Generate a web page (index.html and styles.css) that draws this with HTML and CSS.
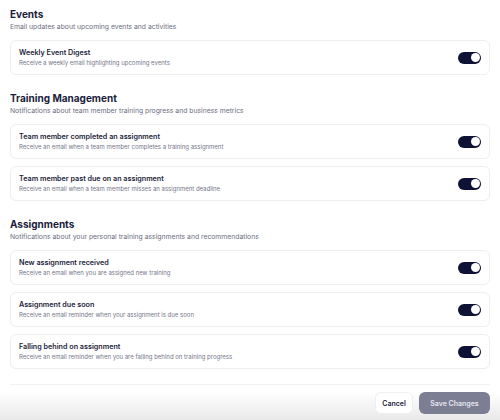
FILE: index.html
```html
<!DOCTYPE html>
<html>
<head>
<meta charset="utf-8">
<link rel="stylesheet" href="styles.css">
</head>
<body>
<div class="page">
  <section class="section">
    <h2 class="heading">Events</h2>
    <p class="sub">Email updates about upcoming events and activities</p>
    <div class="cards">
      <div class="card">
        <div class="text">
          <div class="title">Weekly Event Digest</div>
          <div class="desc">Receive a weekly email highlighting upcoming events</div>
        </div>
        <span class="toggle"><span class="knob"></span></span>
      </div>
    </div>
  </section>
  <section class="section">
    <h2 class="heading">Training Management</h2>
    <p class="sub">Notifications about team member training progress and business metrics</p>
    <div class="cards">
      <div class="card">
        <div class="text">
          <div class="title">Team member completed an assignment</div>
          <div class="desc">Receive an email when a team member completes a training assignment</div>
        </div>
        <span class="toggle"><span class="knob"></span></span>
      </div>
      <div class="card">
        <div class="text">
          <div class="title">Team member past due on an assignment</div>
          <div class="desc">Receive an email when a team member misses an assignment deadline</div>
        </div>
        <span class="toggle"><span class="knob"></span></span>
      </div>
    </div>
  </section>
  <section class="section">
    <h2 class="heading">Assignments</h2>
    <p class="sub">Notifications about your personal training assignments and recommendations</p>
    <div class="cards">
      <div class="card">
        <div class="text">
          <div class="title">New assignment received</div>
          <div class="desc">Receive an email when you are assigned new training</div>
        </div>
        <span class="toggle"><span class="knob"></span></span>
      </div>
      <div class="card">
        <div class="text">
          <div class="title">Assignment due soon</div>
          <div class="desc">Receive an email reminder when your assignment is due soon</div>
        </div>
        <span class="toggle"><span class="knob"></span></span>
      </div>
      <div class="card">
        <div class="text">
          <div class="title">Falling behind on assignment</div>
          <div class="desc">Receive an email reminder when you are falling behind on training progress</div>
        </div>
        <span class="toggle"><span class="knob"></span></span>
      </div>
    </div>
  </section>
  <div class="separator"></div>
</div>
<footer class="footer">
  <button class="btn cancel">Cancel</button>
  <button class="btn save">Save Changes</button>
</footer>
</body>
</html>
```
FILE: styles.css
```css
html, body {
  margin: 0;
  padding: 0;
  background: #ffffff;
  height: 420px;
  overflow: hidden;
}
body {
  font-family: Inter, "Noto Sans", sans-serif;
  color: #1b1d3a;
}
.page {
  padding: 7px 10px 0 10px;
}
.section {
  margin-bottom: 16px;
}
.section:last-of-type {
  margin-bottom: 0;
}
.heading {
  margin: 0;
  font-size: 10px;
  line-height: 14px;
  font-weight: 700;
  color: #1a1c3b;
}
.sub {
  margin: 0 0 7px 0;
  font-size: 6.8px;
  line-height: 12px;
  color: #6c6e82;
}
.cards {
  display: flex;
  flex-direction: column;
  gap: 7px;
}
.card {
  height: 35px;
  box-sizing: border-box;
  border: 1px solid #eeeef2;
  border-radius: 6px;
  padding: 0 8px;
  display: flex;
  align-items: center;
  justify-content: space-between;
}
.text {
  display: flex;
  flex-direction: column;
  gap: 1px;
}
.title {
  font-size: 7.2px;
  line-height: 10px;
  font-weight: 600;
  color: #1c1e3a;
}
.desc {
  font-size: 6px;
  line-height: 8px;
  color: #74768a;
}
.toggle {
  width: 23px;
  height: 12px;
  border-radius: 6px;
  background: #0e1336;
  display: flex;
  align-items: center;
  justify-content: flex-end;
  padding: 0 1.5px;
  box-sizing: border-box;
}
.knob {
  width: 9px;
  height: 9px;
  border-radius: 50%;
  background: #ffffff;
}
.separator {
  margin-top: 15px;
  height: 1px;
  background: #f2f2f4;
}
.footer {
  margin-top: 7px;
  height: 29px;
  padding: 0 10px;
  display: flex;
  justify-content: flex-end;
  align-items: flex-start;
  gap: 6px;
  background: linear-gradient(to bottom, #ffffff 0%, #e8e8e9 100%);
}
.btn {
  height: 22px;
  border-radius: 6px;
  font-family: Inter, "Noto Sans", sans-serif;
  font-size: 7px;
  font-weight: 600;
  padding: 0;
  cursor: pointer;
}
.cancel {
  width: 38px;
  background: #ffffff;
  border: 1px solid #efeff2;
  color: #1b1d3a;
}
.save {
  width: 71px;
  background: #7c7e93;
  border: none;
  color: #e6e7ee;
}
```
